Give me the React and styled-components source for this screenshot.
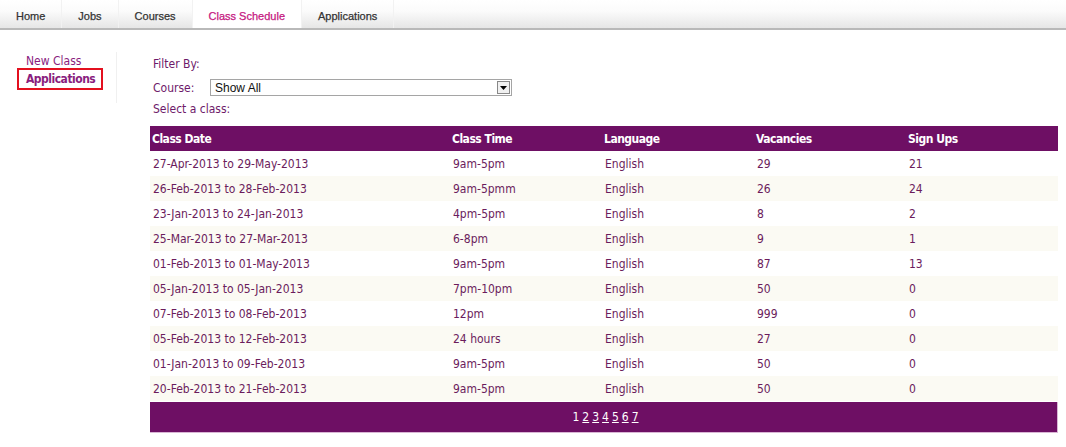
import styled, { createGlobalStyle } from "styled-components";

const GlobalStyle = createGlobalStyle`
  body {
    margin: 0;
    background: #fff;
    font-family: Tahoma, "DejaVu Sans Condensed", "DejaVu Sans", sans-serif;
  }
`;

const NavBar = styled.div`
  height: 28px;
  display: flex;
  background: linear-gradient(#ffffff 0%, #fbfbfb 40%, #e6e6e6 100%);
  border-bottom: 2px solid #b9b9b9;
`;

const Tab = styled.div`
  padding: 3px 16px 0 16px;
  display: flex;
  align-items: center;
  font-family: "Liberation Sans", Arial, sans-serif;
  font-size: 11px;
  color: ${(p) => (p.active ? "#c5177f" : "#333")};
  -webkit-text-stroke: 0.25px ${(p) => (p.active ? "#c5177f" : "#333")};
  background: ${(p) => (p.active ? "#fff" : "transparent")};
  border-right: 1px solid #f2f2f2;
  box-sizing: border-box;
`;

const Main = styled.div`
  display: flex;
  padding-top: 22px;
`;

const Side = styled.div`
  width: 117px;
  height: 51px;
  border-right: 1px solid #f0f0f0;
  box-sizing: border-box;
  padding: 2px 0 0 17px;
  display: flex;
  flex-direction: column;
  align-items: flex-start;
`;

const SideLink = styled.div`
  font-size: 12px;
  color: #8a1d7e;
  font-weight: ${(p) => (p.selected ? "bold" : "normal")};
  letter-spacing: ${(p) => (p.selected ? "-0.5px" : "0")};
  padding: ${(p) => (p.selected ? "2px 6px 2px 7px" : "0 9px")};
  border: ${(p) => (p.selected ? "2px solid #e3101f" : "none")};
  line-height: 14px;
`;

const Content = styled.div`
  margin-left: 33px;
  margin-top: 4px;
  width: 908px;
`;

const FormRow = styled.div`
  display: flex;
  align-items: center;
  font-size: 12px;
  color: #6e1a6a;
  padding-left: 3px;
  height: ${(p) => p.h || 16}px;
  margin-bottom: ${(p) => p.mb || 0}px;
`;

const Label = styled.span`
  width: 57px;
`;

const Select = styled.div`
  width: 302px;
  height: 17px;
  box-sizing: border-box;
  border: 1px solid #a5a5a5;
  display: flex;
  align-items: center;
  font-family: "Liberation Sans", Arial, sans-serif;
  font-size: 12px;
  color: #111;
  padding-left: 4px;
  position: relative;
`;

const Arrow = styled.div`
  position: absolute;
  right: 1px;
  top: 1px;
  width: 11px;
  height: 11px;
  border: 1px solid #888;
  background: #f0f0f0;
  display: flex;
  align-items: center;
  justify-content: center;
`;

const Table = styled.div`
  margin-top: 9px;
  width: 908px;
`;

const Row = styled.div`
  display: grid;
  grid-template-columns: 300px 152px 152px 152px 152px;
  height: 25px;
  align-items: center;
  font-size: 12px;
  background: ${(p) => (p.head ? "#6e0f64" : p.alt ? "#fbfaf3" : "#fff")};
  color: ${(p) => (p.head ? "#fff" : "#6b1c5c")};
  font-weight: ${(p) => (p.head ? "bold" : "normal")};
  letter-spacing: ${(p) => (p.head ? "-0.5px" : "0")};
`;

const Cell = styled.div`
  padding-left: ${(p) => (p.head ? 2 : 3)}px;
  white-space: nowrap;
`;

const Footer = styled.div`
  height: 30px;
  margin-top: 1px;
  background: #6e0f64;
  border-right: 1px solid #d9b6d5;
  border-bottom: 1px solid #d9b6d5;
  display: flex;
  align-items: center;
  justify-content: center;
  gap: 3px;
  font-size: 12px;
  color: #fff;
  padding-left: 4px;
`;

const PageLink = styled.span`
  text-decoration: ${(p) => (p.current ? "none" : "underline")};
`;

const tabs = ["Home", "Jobs", "Courses", "Class Schedule", "Applications"];

const classes = [
  ["27-Apr-2013 to 29-May-2013", "9am-5pm", "English", "29", "21"],
  ["26-Feb-2013 to 28-Feb-2013", "9am-5pmm", "English", "26", "24"],
  ["23-Jan-2013 to 24-Jan-2013", "4pm-5pm", "English", "8", "2"],
  ["25-Mar-2013 to 27-Mar-2013", "6-8pm", "English", "9", "1"],
  ["01-Feb-2013 to 01-May-2013", "9am-5pm", "English", "87", "13"],
  ["05-Jan-2013 to 05-Jan-2013", "7pm-10pm", "English", "50", "0"],
  ["07-Feb-2013 to 08-Feb-2013", "12pm", "English", "999", "0"],
  ["05-Feb-2013 to 12-Feb-2013", "24 hours", "English", "27", "0"],
  ["01-Jan-2013 to 09-Feb-2013", "9am-5pm", "English", "50", "0"],
  ["20-Feb-2013 to 21-Feb-2013", "9am-5pm", "English", "50", "0"],
];

const headers = ["Class Date", "Class Time", "Language", "Vacancies", "Sign Ups"];

export default function App() {
  return (
    <>
      <GlobalStyle />
      <NavBar>
        {tabs.map((t) => (
          <Tab key={t} active={t === "Class Schedule"}>
            {t}
          </Tab>
        ))}
      </NavBar>
      <Main>
        <Side>
          <SideLink>New Class</SideLink>
          <SideLink selected>Applications</SideLink>
        </Side>
        <Content>
          <FormRow h={16} mb={7}>Filter By:</FormRow>
          <FormRow h={17} mb={5}>
            <Label>Course:</Label>
            <Select>
              Show All
              <Arrow>
                <svg width="7" height="4" viewBox="0 0 7 4">
                  <path d="M0 0h7L3.5 4z" fill="#000" />
                </svg>
              </Arrow>
            </Select>
          </FormRow>
          <FormRow h={16}>Select a class:</FormRow>
          <Table>
            <Row head>
              {headers.map((h) => (
                <Cell head key={h}>{h}</Cell>
              ))}
            </Row>
            {classes.map((r, i) => (
              <Row key={i} alt={i % 2 === 1}>
                {r.map((c, j) => (
                  <Cell key={j}>{c}</Cell>
                ))}
              </Row>
            ))}
            <Footer>
              {[1, 2, 3, 4, 5, 6, 7].map((n) => (
                <PageLink key={n} current={n === 1}>{n}</PageLink>
              ))}
            </Footer>
          </Table>
        </Content>
      </Main>
    </>
  );
}
